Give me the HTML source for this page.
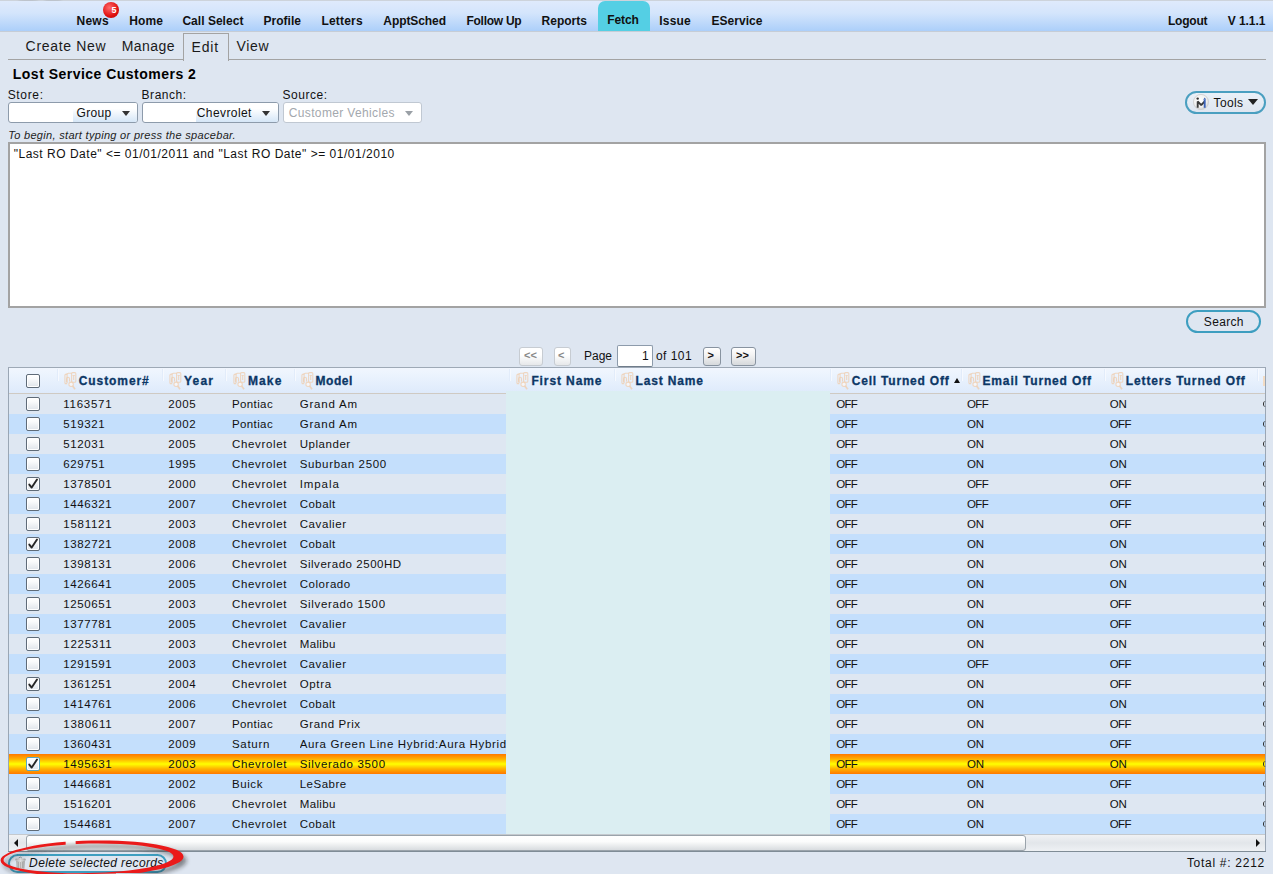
<!DOCTYPE html>
<html><head><meta charset="utf-8"><style>
html,body{margin:0;padding:0;}
body{width:1273px;height:874px;position:relative;overflow:hidden;background:#dee6f1;font-family:"Liberation Sans", sans-serif;}
.t{position:absolute;line-height:1;white-space:nowrap;font-family:"Liberation Sans", sans-serif;}
</style></head><body>
<div style="position:absolute;left:0;top:0;width:1273px;height:1px;background:#cdd3db"></div>
<div style="position:absolute;left:18px;top:-2px;width:20px;height:4px;border-radius:50%;background:#b4bac2;filter:blur(1px);opacity:0.7"></div>
<div style="position:absolute;left:44px;top:-2px;width:18px;height:4px;border-radius:50%;background:#b4bac2;filter:blur(1px);opacity:0.7"></div>
<div style="position:absolute;left:0;top:1px;width:1273px;height:30px;background:linear-gradient(#dfeafc,#d4e5fc 40%,#accffa)"></div>
<div style="position:absolute;left:0;top:31px;width:1273px;height:1px;background:#c6cdd6"></div>
<div style="position:absolute;left:598px;top:1px;width:52px;height:30px;background:#54cfe4;border-radius:7px 7px 0 0"></div>
<div class="t" style="left:76.5px;top:15.34px;font-size:12px;font-weight:bold;font-style:normal;color:#111;letter-spacing:0.264px;">News</div>
<div class="t" style="left:129.3px;top:15.34px;font-size:12px;font-weight:bold;font-style:normal;color:#111;letter-spacing:0.089px;">Home</div>
<div class="t" style="left:182.4px;top:15.34px;font-size:12px;font-weight:bold;font-style:normal;color:#111;letter-spacing:0.03px;">Call Select</div>
<div class="t" style="left:263.5px;top:15.34px;font-size:12px;font-weight:bold;font-style:normal;color:#111;letter-spacing:0.01px;">Profile</div>
<div class="t" style="left:321.5px;top:15.34px;font-size:12px;font-weight:bold;font-style:normal;color:#111;letter-spacing:0.183px;">Letters</div>
<div class="t" style="left:383.3px;top:15.34px;font-size:12px;font-weight:bold;font-style:normal;color:#111;letter-spacing:-0.081px;">ApptSched</div>
<div class="t" style="left:466.5px;top:15.34px;font-size:12px;font-weight:bold;font-style:normal;color:#111;letter-spacing:-0.277px;">Follow Up</div>
<div class="t" style="left:541.6px;top:15.34px;font-size:12px;font-weight:bold;font-style:normal;color:#111;letter-spacing:-0.006px;">Reports</div>
<div class="t" style="left:659.2px;top:15.34px;font-size:12px;font-weight:bold;font-style:normal;color:#111;letter-spacing:0.226px;">Issue</div>
<div class="t" style="left:711.6px;top:15.34px;font-size:12px;font-weight:bold;font-style:normal;color:#111;letter-spacing:0.002px;">EService</div>
<div class="t" style="left:1167.9px;top:15.34px;font-size:12px;font-weight:bold;font-style:normal;color:#111;letter-spacing:-0.207px;">Logout</div>
<div class="t" style="left:1227.7px;top:15.34px;font-size:12px;font-weight:bold;font-style:normal;color:#111;letter-spacing:-0.057px;">V 1.1.1</div>
<div class="t" style="left:607.3px;top:14.34px;font-size:12px;font-weight:bold;font-style:normal;color:#111;letter-spacing:-0.1px;">Fetch</div>
<div style="position:absolute;left:103px;top:2px;width:16px;height:16px;border-radius:50%;background:radial-gradient(circle at 40% 35%,#ff6b6b,#e01010 60%,#b00000);"></div>
<div class="t" style="left:111.5px;top:6.38px;font-size:9px;font-weight:bold;font-style:normal;color:#fff;letter-spacing:0px;">5</div>
<div style="position:absolute;left:8px;top:59px;width:1258px;height:1px;background:#a3a3a3"></div>
<div style="position:absolute;left:183px;top:33px;width:44px;height:27px;border:1px solid #a3a3a3;border-bottom:none;background:#dee6f1"></div>
<div class="t" style="left:25.599999999999998px;top:39.45px;font-size:14px;font-weight:normal;font-style:normal;color:#1a1a1a;letter-spacing:0.681px;">Create New</div>
<div class="t" style="left:121.7px;top:39.45px;font-size:14px;font-weight:normal;font-style:normal;color:#1a1a1a;letter-spacing:0.473px;">Manage</div>
<div class="t" style="left:191.5px;top:40.15px;font-size:14px;font-weight:normal;font-style:normal;color:#1a1a1a;letter-spacing:0.869px;">Edit</div>
<div class="t" style="left:236.39999999999998px;top:39.45px;font-size:14px;font-weight:normal;font-style:normal;color:#1a1a1a;letter-spacing:0.727px;">View</div>
<div class="t" style="left:12.8px;top:66.65px;font-size:14px;font-weight:bold;font-style:normal;color:#000;letter-spacing:0.483px;">Lost Service Customers 2</div>
<div class="t" style="left:7.7px;top:88.84px;font-size:12px;font-weight:normal;font-style:normal;color:#111;letter-spacing:0.667px;">Store:</div>
<div class="t" style="left:141.6px;top:88.84px;font-size:12px;font-weight:normal;font-style:normal;color:#111;letter-spacing:0.522px;">Branch:</div>
<div class="t" style="left:282.59999999999997px;top:88.84px;font-size:12px;font-weight:normal;font-style:normal;color:#111;letter-spacing:0.522px;">Source:</div>
<div style="position:absolute;left:8px;top:102px;width:128px;height:19px;border:1px solid #8d9bab;border-radius:3px;background:#fff;overflow:hidden"><div style="position:absolute;right:0;top:0;width:64px;height:19px;background:linear-gradient(#fff 30%,#d5e6f7)"></div></div>
<div class="t" style="left:76.6px;top:106.84px;font-size:12px;font-weight:normal;font-style:normal;color:#111;letter-spacing:0.331px;">Group</div>
<div style="position:absolute;left:122px;top:111px;width:0;height:0;border-left:4px solid transparent;border-right:4px solid transparent;border-top:5px solid #333"></div>
<div style="position:absolute;left:142px;top:102px;width:135px;height:19px;border:1px solid #8d9bab;border-radius:3px;background:#fff;overflow:hidden"><div style="position:absolute;right:0;top:0;width:82px;height:19px;background:linear-gradient(#fff 30%,#d5e6f7)"></div></div>
<div class="t" style="left:196.8px;top:106.84px;font-size:12px;font-weight:normal;font-style:normal;color:#111;letter-spacing:0.405px;">Chevrolet</div>
<div style="position:absolute;left:262px;top:111px;width:0;height:0;border-left:4px solid transparent;border-right:4px solid transparent;border-top:5px solid #333"></div>
<div style="position:absolute;left:283px;top:102px;width:137px;height:19px;border:1px solid #c0c8d2;border-radius:3px;background:#fff;overflow:hidden"></div>
<div class="t" style="left:288.8px;top:106.84px;font-size:12px;font-weight:normal;font-style:normal;color:#a3a8ae;letter-spacing:0.35px;">Customer Vehicles</div>
<div style="position:absolute;left:405px;top:111px;width:0;height:0;border-left:4px solid transparent;border-right:4px solid transparent;border-top:5px solid #9aa0a6"></div>
<div style="position:absolute;left:1185px;top:91px;width:77px;height:19px;border:2px solid #4a9fc0;border-radius:12px;background:linear-gradient(#e9f0f8,#dfe6f0)"></div>
<svg style="position:absolute;left:1193px;top:94px" width="16" height="16" viewBox="0 0 16 16"><defs><radialGradient id="mg" cx="0.45" cy="0.4" r="0.6"><stop offset="0" stop-color="#fff"/><stop offset="0.7" stop-color="#f0f0f0"/><stop offset="1" stop-color="#cfcfcf"/></radialGradient></defs><circle cx="8" cy="8" r="7.6" fill="url(#mg)" stroke="#cdcdcd" stroke-width="0.8"/><path d="M4.7 13.8V7.4L8.2 11.2L11.7 7.4" stroke="#3a3a3a" stroke-width="1.9" fill="none" stroke-linejoin="bevel"/><path d="M11.7 6V13.8" stroke="#3a62b8" stroke-width="1.9"/><circle cx="4.7" cy="4.6" r="1.2" fill="#333"/><path d="M10.2 5.8L11.7 3.4L13.2 5.8z" fill="#3a62b8"/></svg>
<div class="t" style="left:1213.5px;top:96.84px;font-size:12px;font-weight:normal;font-style:normal;color:#111;letter-spacing:0.397px;">Tools</div>
<div style="position:absolute;left:1248px;top:99px;width:0;height:0;border-left:5px solid transparent;border-right:5px solid transparent;border-top:6px solid #222"></div>
<div class="t" style="left:8.2px;top:129.69px;font-size:11px;font-weight:normal;font-style:italic;color:#222;letter-spacing:0.311px;">To begin, start typing or press the spacebar.</div>
<div style="position:absolute;left:8px;top:142px;width:1254px;height:162px;border:2px solid #a3a3a3;background:#fff"></div>
<div class="t" style="left:13.7px;top:147.84px;font-size:12px;font-weight:normal;font-style:normal;color:#111;letter-spacing:0.514px;">"Last RO Date" &lt;= 01/01/2011 and "Last RO Date" &gt;= 01/01/2010</div>
<div style="position:absolute;left:1186px;top:310px;width:71px;height:19px;border:2px solid #3d9ec0;border-radius:12px"></div>
<div class="t" style="left:1203.8px;top:315.84px;font-size:12px;font-weight:normal;font-style:normal;color:#111;letter-spacing:0.331px;">Search</div>
<div style="position:absolute;left:519px;top:347px;width:22px;height:17px;border:1px solid #c7ccd2;border-radius:3px;background:linear-gradient(#fff,#fff 40%,#e6e8ea)"></div>
<div class="t" style="left:524px;top:349.69px;font-size:11px;font-weight:bold;font-style:normal;color:#888;letter-spacing:0px;">&lt;&lt;</div>
<div style="position:absolute;left:554px;top:347px;width:15px;height:17px;border:1px solid #c7ccd2;border-radius:3px;background:linear-gradient(#fff,#fff 40%,#e6e8ea)"></div>
<div class="t" style="left:558px;top:349.69px;font-size:11px;font-weight:bold;font-style:normal;color:#888;letter-spacing:0px;">&lt;</div>
<div class="t" style="left:584px;top:350.14px;font-size:12px;font-weight:normal;font-style:normal;color:#111;letter-spacing:-0.004px;">Page</div>
<div style="position:absolute;left:617px;top:345px;width:34px;height:20px;border:1px solid #8d9bab;border-bottom-color:#6f7c8a;background:#fff;border-radius:2px"></div>
<div class="t" style="left:642px;top:350.14px;font-size:12px;font-weight:normal;font-style:normal;color:#111;letter-spacing:0px;">1</div>
<div class="t" style="left:656px;top:350.14px;font-size:12px;font-weight:normal;font-style:normal;color:#111;letter-spacing:0.443px;">of 101</div>
<div style="position:absolute;left:703px;top:347px;width:16px;height:17px;border:1px solid #8893a0;border-radius:3px;background:linear-gradient(#fff,#f4f4f4 40%,#d6d9dc)"></div>
<div class="t" style="left:707.5px;top:349.69px;font-size:11px;font-weight:bold;font-style:normal;color:#111;letter-spacing:0px;">&gt;</div>
<div style="position:absolute;left:731px;top:347px;width:23px;height:17px;border:1px solid #8893a0;border-radius:3px;background:linear-gradient(#fff,#f4f4f4 40%,#d6d9dc)"></div>
<div class="t" style="left:736px;top:349.69px;font-size:11px;font-weight:bold;font-style:normal;color:#111;letter-spacing:0px;">&gt;&gt;</div>
<div style="position:absolute;left:8px;top:367px;width:1256px;height:483px;border:1px solid #9aa6b4;border-top-color:#9ea9b6;border-bottom-color:#7f8c96;background:#dfe7f1"></div>
<div style="position:absolute;left:9px;top:368px;width:1256px;height:25px;background:linear-gradient(#f1f6fe,#e9f2fd 40%,#deeafb)"></div>
<div style="position:absolute;left:9px;top:393px;width:1256px;height:1px;background:#cfcac3"></div>
<div style="position:absolute;left:57px;top:369px;width:1px;height:12px;background:#e2ecfa"></div>
<div style="position:absolute;left:58px;top:369px;width:1px;height:12px;background:#f6f9fe"></div>
<div style="position:absolute;left:162px;top:369px;width:1px;height:12px;background:#e2ecfa"></div>
<div style="position:absolute;left:163px;top:369px;width:1px;height:12px;background:#f6f9fe"></div>
<div style="position:absolute;left:225px;top:369px;width:1px;height:12px;background:#e2ecfa"></div>
<div style="position:absolute;left:226px;top:369px;width:1px;height:12px;background:#f6f9fe"></div>
<div style="position:absolute;left:294px;top:369px;width:1px;height:12px;background:#e2ecfa"></div>
<div style="position:absolute;left:295px;top:369px;width:1px;height:12px;background:#f6f9fe"></div>
<div style="position:absolute;left:509px;top:369px;width:1px;height:12px;background:#e2ecfa"></div>
<div style="position:absolute;left:510px;top:369px;width:1px;height:12px;background:#f6f9fe"></div>
<div style="position:absolute;left:614px;top:369px;width:1px;height:12px;background:#e2ecfa"></div>
<div style="position:absolute;left:615px;top:369px;width:1px;height:12px;background:#f6f9fe"></div>
<div style="position:absolute;left:830px;top:369px;width:1px;height:12px;background:#e2ecfa"></div>
<div style="position:absolute;left:831px;top:369px;width:1px;height:12px;background:#f6f9fe"></div>
<div style="position:absolute;left:961px;top:369px;width:1px;height:12px;background:#e2ecfa"></div>
<div style="position:absolute;left:962px;top:369px;width:1px;height:12px;background:#f6f9fe"></div>
<div style="position:absolute;left:1104px;top:369px;width:1px;height:12px;background:#e2ecfa"></div>
<div style="position:absolute;left:1105px;top:369px;width:1px;height:12px;background:#f6f9fe"></div>
<div style="position:absolute;left:1257px;top:369px;width:1px;height:12px;background:#e2ecfa"></div>
<div style="position:absolute;left:1258px;top:369px;width:1px;height:12px;background:#f6f9fe"></div>
<div style="position:absolute;left:26px;top:374px;width:12px;height:12px;border:1px solid #5f6b78;border-radius:2px;background:linear-gradient(#fff,#fafbfc 30%,#dfe4ea);box-shadow:inset 0 0 0 1px #fff"></div>
<svg style="position:absolute;left:63.8px;top:372px" width="14" height="19" viewBox="0 0 14 19"><g fill="none" stroke="#f0cba8" stroke-width="1.05" stroke-opacity="0.72" stroke-linejoin="round"><path d="M0.9 11.6V3.6Q0.9 2.1 2.4 2.1H3.2 M0.9 11.6H3.2"/><path d="M3.1 11.1V2.6Q3.1 1.2 4.5 1.2H7.6"/><rect x="7.6" y="0.6" width="4.2" height="9.6" rx="1"/><path d="M2.6 10.2V6.8Q2.6 5.3 4 5.3Q5.5 5.3 5.5 6.8V9.6"/><path d="M8.6 3.4H10.8 M9.7 3.6V8"/><circle cx="7.1" cy="12.3" r="2.2" fill="#f4f6fb"/><path d="M8.7 14.1L11 17.3" stroke-width="1.7"/></g></svg>
<div class="t" style="left:78.7px;top:375.44px;font-size:12px;font-weight:bold;font-style:normal;color:#0c3766;letter-spacing:0.924px;-webkit-text-stroke:0.3px #0c3766">Customer#</div>
<svg style="position:absolute;left:168.7px;top:372px" width="14" height="19" viewBox="0 0 14 19"><g fill="none" stroke="#f0cba8" stroke-width="1.05" stroke-opacity="0.72" stroke-linejoin="round"><path d="M0.9 11.6V3.6Q0.9 2.1 2.4 2.1H3.2 M0.9 11.6H3.2"/><path d="M3.1 11.1V2.6Q3.1 1.2 4.5 1.2H7.6"/><rect x="7.6" y="0.6" width="4.2" height="9.6" rx="1"/><path d="M2.6 10.2V6.8Q2.6 5.3 4 5.3Q5.5 5.3 5.5 6.8V9.6"/><path d="M8.6 3.4H10.8 M9.7 3.6V8"/><circle cx="7.1" cy="12.3" r="2.2" fill="#f4f6fb"/><path d="M8.7 14.1L11 17.3" stroke-width="1.7"/></g></svg>
<div class="t" style="left:183.9px;top:375.44px;font-size:12px;font-weight:bold;font-style:normal;color:#0c3766;letter-spacing:1.26px;-webkit-text-stroke:0.3px #0c3766">Year</div>
<svg style="position:absolute;left:232.8px;top:372px" width="14" height="19" viewBox="0 0 14 19"><g fill="none" stroke="#f0cba8" stroke-width="1.05" stroke-opacity="0.72" stroke-linejoin="round"><path d="M0.9 11.6V3.6Q0.9 2.1 2.4 2.1H3.2 M0.9 11.6H3.2"/><path d="M3.1 11.1V2.6Q3.1 1.2 4.5 1.2H7.6"/><rect x="7.6" y="0.6" width="4.2" height="9.6" rx="1"/><path d="M2.6 10.2V6.8Q2.6 5.3 4 5.3Q5.5 5.3 5.5 6.8V9.6"/><path d="M8.6 3.4H10.8 M9.7 3.6V8"/><circle cx="7.1" cy="12.3" r="2.2" fill="#f4f6fb"/><path d="M8.7 14.1L11 17.3" stroke-width="1.7"/></g></svg>
<div class="t" style="left:248.0px;top:375.44px;font-size:12px;font-weight:bold;font-style:normal;color:#0c3766;letter-spacing:1.096px;-webkit-text-stroke:0.3px #0c3766">Make</div>
<svg style="position:absolute;left:300.9px;top:372px" width="14" height="19" viewBox="0 0 14 19"><g fill="none" stroke="#f0cba8" stroke-width="1.05" stroke-opacity="0.72" stroke-linejoin="round"><path d="M0.9 11.6V3.6Q0.9 2.1 2.4 2.1H3.2 M0.9 11.6H3.2"/><path d="M3.1 11.1V2.6Q3.1 1.2 4.5 1.2H7.6"/><rect x="7.6" y="0.6" width="4.2" height="9.6" rx="1"/><path d="M2.6 10.2V6.8Q2.6 5.3 4 5.3Q5.5 5.3 5.5 6.8V9.6"/><path d="M8.6 3.4H10.8 M9.7 3.6V8"/><circle cx="7.1" cy="12.3" r="2.2" fill="#f4f6fb"/><path d="M8.7 14.1L11 17.3" stroke-width="1.7"/></g></svg>
<div class="t" style="left:315.5px;top:375.44px;font-size:12px;font-weight:bold;font-style:normal;color:#0c3766;letter-spacing:0.569px;-webkit-text-stroke:0.3px #0c3766">Model</div>
<svg style="position:absolute;left:516.2px;top:372px" width="14" height="19" viewBox="0 0 14 19"><g fill="none" stroke="#f0cba8" stroke-width="1.05" stroke-opacity="0.72" stroke-linejoin="round"><path d="M0.9 11.6V3.6Q0.9 2.1 2.4 2.1H3.2 M0.9 11.6H3.2"/><path d="M3.1 11.1V2.6Q3.1 1.2 4.5 1.2H7.6"/><rect x="7.6" y="0.6" width="4.2" height="9.6" rx="1"/><path d="M2.6 10.2V6.8Q2.6 5.3 4 5.3Q5.5 5.3 5.5 6.8V9.6"/><path d="M8.6 3.4H10.8 M9.7 3.6V8"/><circle cx="7.1" cy="12.3" r="2.2" fill="#f4f6fb"/><path d="M8.7 14.1L11 17.3" stroke-width="1.7"/></g></svg>
<div class="t" style="left:531.4px;top:375.44px;font-size:12px;font-weight:bold;font-style:normal;color:#0c3766;letter-spacing:0.898px;-webkit-text-stroke:0.3px #0c3766">First Name</div>
<svg style="position:absolute;left:621px;top:372px" width="14" height="19" viewBox="0 0 14 19"><g fill="none" stroke="#f0cba8" stroke-width="1.05" stroke-opacity="0.72" stroke-linejoin="round"><path d="M0.9 11.6V3.6Q0.9 2.1 2.4 2.1H3.2 M0.9 11.6H3.2"/><path d="M3.1 11.1V2.6Q3.1 1.2 4.5 1.2H7.6"/><rect x="7.6" y="0.6" width="4.2" height="9.6" rx="1"/><path d="M2.6 10.2V6.8Q2.6 5.3 4 5.3Q5.5 5.3 5.5 6.8V9.6"/><path d="M8.6 3.4H10.8 M9.7 3.6V8"/><circle cx="7.1" cy="12.3" r="2.2" fill="#f4f6fb"/><path d="M8.7 14.1L11 17.3" stroke-width="1.7"/></g></svg>
<div class="t" style="left:635.5px;top:375.44px;font-size:12px;font-weight:bold;font-style:normal;color:#0c3766;letter-spacing:0.835px;-webkit-text-stroke:0.3px #0c3766">Last Name</div>
<svg style="position:absolute;left:837px;top:372px" width="14" height="19" viewBox="0 0 14 19"><g fill="none" stroke="#f0cba8" stroke-width="1.05" stroke-opacity="0.72" stroke-linejoin="round"><path d="M0.9 11.6V3.6Q0.9 2.1 2.4 2.1H3.2 M0.9 11.6H3.2"/><path d="M3.1 11.1V2.6Q3.1 1.2 4.5 1.2H7.6"/><rect x="7.6" y="0.6" width="4.2" height="9.6" rx="1"/><path d="M2.6 10.2V6.8Q2.6 5.3 4 5.3Q5.5 5.3 5.5 6.8V9.6"/><path d="M8.6 3.4H10.8 M9.7 3.6V8"/><circle cx="7.1" cy="12.3" r="2.2" fill="#f4f6fb"/><path d="M8.7 14.1L11 17.3" stroke-width="1.7"/></g></svg>
<div class="t" style="left:851.7px;top:375.44px;font-size:12px;font-weight:bold;font-style:normal;color:#0c3766;letter-spacing:0.803px;-webkit-text-stroke:0.3px #0c3766">Cell Turned Off</div>
<svg style="position:absolute;left:968px;top:372px" width="14" height="19" viewBox="0 0 14 19"><g fill="none" stroke="#f0cba8" stroke-width="1.05" stroke-opacity="0.72" stroke-linejoin="round"><path d="M0.9 11.6V3.6Q0.9 2.1 2.4 2.1H3.2 M0.9 11.6H3.2"/><path d="M3.1 11.1V2.6Q3.1 1.2 4.5 1.2H7.6"/><rect x="7.6" y="0.6" width="4.2" height="9.6" rx="1"/><path d="M2.6 10.2V6.8Q2.6 5.3 4 5.3Q5.5 5.3 5.5 6.8V9.6"/><path d="M8.6 3.4H10.8 M9.7 3.6V8"/><circle cx="7.1" cy="12.3" r="2.2" fill="#f4f6fb"/><path d="M8.7 14.1L11 17.3" stroke-width="1.7"/></g></svg>
<div class="t" style="left:982.5px;top:375.44px;font-size:12px;font-weight:bold;font-style:normal;color:#0c3766;letter-spacing:0.847px;-webkit-text-stroke:0.3px #0c3766">Email Turned Off</div>
<svg style="position:absolute;left:1111px;top:372px" width="14" height="19" viewBox="0 0 14 19"><g fill="none" stroke="#f0cba8" stroke-width="1.05" stroke-opacity="0.72" stroke-linejoin="round"><path d="M0.9 11.6V3.6Q0.9 2.1 2.4 2.1H3.2 M0.9 11.6H3.2"/><path d="M3.1 11.1V2.6Q3.1 1.2 4.5 1.2H7.6"/><rect x="7.6" y="0.6" width="4.2" height="9.6" rx="1"/><path d="M2.6 10.2V6.8Q2.6 5.3 4 5.3Q5.5 5.3 5.5 6.8V9.6"/><path d="M8.6 3.4H10.8 M9.7 3.6V8"/><circle cx="7.1" cy="12.3" r="2.2" fill="#f4f6fb"/><path d="M8.7 14.1L11 17.3" stroke-width="1.7"/></g></svg>
<div class="t" style="left:1125.7px;top:375.44px;font-size:12px;font-weight:bold;font-style:normal;color:#0c3766;letter-spacing:0.902px;-webkit-text-stroke:0.3px #0c3766">Letters Turned Off</div>
<div style="position:absolute;left:1263px;top:376px;width:2px;height:10px;background:#f3dcc4"></div>
<div style="position:absolute;left:954px;top:378px;width:0;height:0;border-left:3.5px solid transparent;border-right:3.5px solid transparent;border-bottom:5px solid #111"></div>
<div style="position:absolute;left:9px;top:394px;width:1256px;height:20px;background:#dee7f2"></div>
<div style="position:absolute;left:26px;top:397px;width:12px;height:12px;border:1px solid #5f6b78;border-radius:2px;background:linear-gradient(#fff,#fafbfc 30%,#dfe4ea);box-shadow:inset 0 0 0 1px #fff"></div>
<div class="t" style="left:63.3px;top:399.27px;font-size:11.5px;font-weight:normal;font-style:normal;color:#111;letter-spacing:0.732px;">1163571</div>
<div class="t" style="left:168.2px;top:399.27px;font-size:11.5px;font-weight:normal;font-style:normal;color:#111;letter-spacing:0.609px;">2005</div>
<div class="t" style="left:232px;top:399.27px;font-size:11.5px;font-weight:normal;font-style:normal;color:#111;letter-spacing:0.379px;">Pontiac</div>
<div style="position:absolute;left:300px;top:394px;width:206px;height:20px;overflow:hidden"><div class="t" style="left:-0.3px;top:5.27px;font-size:11.5px;font-weight:normal;font-style:normal;color:#111;letter-spacing:0.783px;">Grand Am</div></div>
<div class="t" style="left:836.2px;top:399.27px;font-size:11.5px;font-weight:normal;font-style:normal;color:#111;letter-spacing:-0.667px;">OFF</div>
<div class="t" style="left:967px;top:399.27px;font-size:11.5px;font-weight:normal;font-style:normal;color:#111;letter-spacing:-0.667px;">OFF</div>
<div class="t" style="left:1109.8px;top:399.27px;font-size:11.5px;font-weight:normal;font-style:normal;color:#111;letter-spacing:-0.125px;">ON</div>
<div style="position:absolute;left:1263px;top:401px;width:3px;height:6px;border-left:1.6px solid #2a2a2a;border-radius:3px 0 0 3px;box-sizing:border-box"></div>
<div style="position:absolute;left:9px;top:414px;width:1256px;height:20px;background:#c4dffc"></div>
<div style="position:absolute;left:26px;top:417px;width:12px;height:12px;border:1px solid #5f6b78;border-radius:2px;background:linear-gradient(#fff,#fafbfc 30%,#dfe4ea);box-shadow:inset 0 0 0 1px #fff"></div>
<div class="t" style="left:63.3px;top:419.27px;font-size:11.5px;font-weight:normal;font-style:normal;color:#111;letter-spacing:0.609px;">519321</div>
<div class="t" style="left:168.2px;top:419.27px;font-size:11.5px;font-weight:normal;font-style:normal;color:#111;letter-spacing:0.609px;">2002</div>
<div class="t" style="left:232px;top:419.27px;font-size:11.5px;font-weight:normal;font-style:normal;color:#111;letter-spacing:0.379px;">Pontiac</div>
<div style="position:absolute;left:300px;top:414px;width:206px;height:20px;overflow:hidden"><div class="t" style="left:-0.3px;top:5.27px;font-size:11.5px;font-weight:normal;font-style:normal;color:#111;letter-spacing:0.783px;">Grand Am</div></div>
<div class="t" style="left:836.2px;top:419.27px;font-size:11.5px;font-weight:normal;font-style:normal;color:#111;letter-spacing:-0.667px;">OFF</div>
<div class="t" style="left:967px;top:419.27px;font-size:11.5px;font-weight:normal;font-style:normal;color:#111;letter-spacing:-0.125px;">ON</div>
<div class="t" style="left:1109.8px;top:419.27px;font-size:11.5px;font-weight:normal;font-style:normal;color:#111;letter-spacing:-0.667px;">OFF</div>
<div style="position:absolute;left:1263px;top:421px;width:3px;height:6px;border-left:1.6px solid #2a2a2a;border-radius:3px 0 0 3px;box-sizing:border-box"></div>
<div style="position:absolute;left:9px;top:434px;width:1256px;height:20px;background:#dee7f2"></div>
<div style="position:absolute;left:26px;top:437px;width:12px;height:12px;border:1px solid #5f6b78;border-radius:2px;background:linear-gradient(#fff,#fafbfc 30%,#dfe4ea);box-shadow:inset 0 0 0 1px #fff"></div>
<div class="t" style="left:63.3px;top:439.27px;font-size:11.5px;font-weight:normal;font-style:normal;color:#111;letter-spacing:0.609px;">512031</div>
<div class="t" style="left:168.2px;top:439.27px;font-size:11.5px;font-weight:normal;font-style:normal;color:#111;letter-spacing:0.609px;">2005</div>
<div class="t" style="left:232px;top:439.27px;font-size:11.5px;font-weight:normal;font-style:normal;color:#111;letter-spacing:0.644px;">Chevrolet</div>
<div style="position:absolute;left:300px;top:434px;width:206px;height:20px;overflow:hidden"><div class="t" style="left:-0.3px;top:5.27px;font-size:11.5px;font-weight:normal;font-style:normal;color:#111;letter-spacing:0.543px;">Uplander</div></div>
<div class="t" style="left:836.2px;top:439.27px;font-size:11.5px;font-weight:normal;font-style:normal;color:#111;letter-spacing:-0.667px;">OFF</div>
<div class="t" style="left:967px;top:439.27px;font-size:11.5px;font-weight:normal;font-style:normal;color:#111;letter-spacing:-0.125px;">ON</div>
<div class="t" style="left:1109.8px;top:439.27px;font-size:11.5px;font-weight:normal;font-style:normal;color:#111;letter-spacing:-0.125px;">ON</div>
<div style="position:absolute;left:1263px;top:441px;width:3px;height:6px;border-left:1.6px solid #2a2a2a;border-radius:3px 0 0 3px;box-sizing:border-box"></div>
<div style="position:absolute;left:9px;top:454px;width:1256px;height:20px;background:#c4dffc"></div>
<div style="position:absolute;left:26px;top:457px;width:12px;height:12px;border:1px solid #5f6b78;border-radius:2px;background:linear-gradient(#fff,#fafbfc 30%,#dfe4ea);box-shadow:inset 0 0 0 1px #fff"></div>
<div class="t" style="left:63.3px;top:459.27px;font-size:11.5px;font-weight:normal;font-style:normal;color:#111;letter-spacing:0.609px;">629751</div>
<div class="t" style="left:168.2px;top:459.27px;font-size:11.5px;font-weight:normal;font-style:normal;color:#111;letter-spacing:0.609px;">1995</div>
<div class="t" style="left:232px;top:459.27px;font-size:11.5px;font-weight:normal;font-style:normal;color:#111;letter-spacing:0.644px;">Chevrolet</div>
<div style="position:absolute;left:300px;top:454px;width:206px;height:20px;overflow:hidden"><div class="t" style="left:-0.3px;top:5.27px;font-size:11.5px;font-weight:normal;font-style:normal;color:#111;letter-spacing:0.647px;">Suburban 2500</div></div>
<div class="t" style="left:836.2px;top:459.27px;font-size:11.5px;font-weight:normal;font-style:normal;color:#111;letter-spacing:-0.667px;">OFF</div>
<div class="t" style="left:967px;top:459.27px;font-size:11.5px;font-weight:normal;font-style:normal;color:#111;letter-spacing:-0.125px;">ON</div>
<div class="t" style="left:1109.8px;top:459.27px;font-size:11.5px;font-weight:normal;font-style:normal;color:#111;letter-spacing:-0.125px;">ON</div>
<div style="position:absolute;left:1263px;top:461px;width:3px;height:6px;border-left:1.6px solid #2a2a2a;border-radius:3px 0 0 3px;box-sizing:border-box"></div>
<div style="position:absolute;left:9px;top:474px;width:1256px;height:20px;background:#dee7f2"></div>
<div style="position:absolute;left:26px;top:477px;width:12px;height:12px;border:1px solid #5f6b78;border-radius:2px;background:linear-gradient(#fff,#fafbfc 30%,#dfe4ea);box-shadow:inset 0 0 0 1px #fff"></div><svg style="position:absolute;left:27px;top:477px" width="13" height="13" viewBox="0 0 13 13"><path d="M2.3 7.6 L4.7 10.6 L10 2.6" stroke="#262626" stroke-width="1.9" fill="none" stroke-linejoin="round" stroke-linecap="round"/></svg>
<div class="t" style="left:63.3px;top:479.27px;font-size:11.5px;font-weight:normal;font-style:normal;color:#111;letter-spacing:0.609px;">1378501</div>
<div class="t" style="left:168.2px;top:479.27px;font-size:11.5px;font-weight:normal;font-style:normal;color:#111;letter-spacing:0.609px;">2000</div>
<div class="t" style="left:232px;top:479.27px;font-size:11.5px;font-weight:normal;font-style:normal;color:#111;letter-spacing:0.644px;">Chevrolet</div>
<div style="position:absolute;left:300px;top:474px;width:206px;height:20px;overflow:hidden"><div class="t" style="left:-0.3px;top:5.27px;font-size:11.5px;font-weight:normal;font-style:normal;color:#111;letter-spacing:0.917px;">Impala</div></div>
<div class="t" style="left:836.2px;top:479.27px;font-size:11.5px;font-weight:normal;font-style:normal;color:#111;letter-spacing:-0.667px;">OFF</div>
<div class="t" style="left:967px;top:479.27px;font-size:11.5px;font-weight:normal;font-style:normal;color:#111;letter-spacing:-0.667px;">OFF</div>
<div class="t" style="left:1109.8px;top:479.27px;font-size:11.5px;font-weight:normal;font-style:normal;color:#111;letter-spacing:-0.667px;">OFF</div>
<div style="position:absolute;left:1263px;top:481px;width:3px;height:6px;border-left:1.6px solid #2a2a2a;border-radius:3px 0 0 3px;box-sizing:border-box"></div>
<div style="position:absolute;left:9px;top:494px;width:1256px;height:20px;background:#c4dffc"></div>
<div style="position:absolute;left:26px;top:497px;width:12px;height:12px;border:1px solid #5f6b78;border-radius:2px;background:linear-gradient(#fff,#fafbfc 30%,#dfe4ea);box-shadow:inset 0 0 0 1px #fff"></div>
<div class="t" style="left:63.3px;top:499.27px;font-size:11.5px;font-weight:normal;font-style:normal;color:#111;letter-spacing:0.609px;">1446321</div>
<div class="t" style="left:168.2px;top:499.27px;font-size:11.5px;font-weight:normal;font-style:normal;color:#111;letter-spacing:0.609px;">2007</div>
<div class="t" style="left:232px;top:499.27px;font-size:11.5px;font-weight:normal;font-style:normal;color:#111;letter-spacing:0.644px;">Chevrolet</div>
<div style="position:absolute;left:300px;top:494px;width:206px;height:20px;overflow:hidden"><div class="t" style="left:-0.3px;top:5.27px;font-size:11.5px;font-weight:normal;font-style:normal;color:#111;letter-spacing:0.461px;">Cobalt</div></div>
<div class="t" style="left:836.2px;top:499.27px;font-size:11.5px;font-weight:normal;font-style:normal;color:#111;letter-spacing:-0.667px;">OFF</div>
<div class="t" style="left:967px;top:499.27px;font-size:11.5px;font-weight:normal;font-style:normal;color:#111;letter-spacing:-0.667px;">OFF</div>
<div class="t" style="left:1109.8px;top:499.27px;font-size:11.5px;font-weight:normal;font-style:normal;color:#111;letter-spacing:-0.667px;">OFF</div>
<div style="position:absolute;left:1263px;top:501px;width:3px;height:6px;border-left:1.6px solid #2a2a2a;border-radius:3px 0 0 3px;box-sizing:border-box"></div>
<div style="position:absolute;left:9px;top:514px;width:1256px;height:20px;background:#dee7f2"></div>
<div style="position:absolute;left:26px;top:517px;width:12px;height:12px;border:1px solid #5f6b78;border-radius:2px;background:linear-gradient(#fff,#fafbfc 30%,#dfe4ea);box-shadow:inset 0 0 0 1px #fff"></div>
<div class="t" style="left:63.3px;top:519.27px;font-size:11.5px;font-weight:normal;font-style:normal;color:#111;letter-spacing:0.732px;">1581121</div>
<div class="t" style="left:168.2px;top:519.27px;font-size:11.5px;font-weight:normal;font-style:normal;color:#111;letter-spacing:0.609px;">2003</div>
<div class="t" style="left:232px;top:519.27px;font-size:11.5px;font-weight:normal;font-style:normal;color:#111;letter-spacing:0.644px;">Chevrolet</div>
<div style="position:absolute;left:300px;top:514px;width:206px;height:20px;overflow:hidden"><div class="t" style="left:-0.3px;top:5.27px;font-size:11.5px;font-weight:normal;font-style:normal;color:#111;letter-spacing:0.602px;">Cavalier</div></div>
<div class="t" style="left:836.2px;top:519.27px;font-size:11.5px;font-weight:normal;font-style:normal;color:#111;letter-spacing:-0.667px;">OFF</div>
<div class="t" style="left:967px;top:519.27px;font-size:11.5px;font-weight:normal;font-style:normal;color:#111;letter-spacing:-0.125px;">ON</div>
<div class="t" style="left:1109.8px;top:519.27px;font-size:11.5px;font-weight:normal;font-style:normal;color:#111;letter-spacing:-0.667px;">OFF</div>
<div style="position:absolute;left:1263px;top:521px;width:3px;height:6px;border-left:1.6px solid #2a2a2a;border-radius:3px 0 0 3px;box-sizing:border-box"></div>
<div style="position:absolute;left:9px;top:534px;width:1256px;height:20px;background:#c4dffc"></div>
<div style="position:absolute;left:26px;top:537px;width:12px;height:12px;border:1px solid #5f6b78;border-radius:2px;background:linear-gradient(#fff,#fafbfc 30%,#dfe4ea);box-shadow:inset 0 0 0 1px #fff"></div><svg style="position:absolute;left:27px;top:537px" width="13" height="13" viewBox="0 0 13 13"><path d="M2.3 7.6 L4.7 10.6 L10 2.6" stroke="#262626" stroke-width="1.9" fill="none" stroke-linejoin="round" stroke-linecap="round"/></svg>
<div class="t" style="left:63.3px;top:539.27px;font-size:11.5px;font-weight:normal;font-style:normal;color:#111;letter-spacing:0.609px;">1382721</div>
<div class="t" style="left:168.2px;top:539.27px;font-size:11.5px;font-weight:normal;font-style:normal;color:#111;letter-spacing:0.609px;">2008</div>
<div class="t" style="left:232px;top:539.27px;font-size:11.5px;font-weight:normal;font-style:normal;color:#111;letter-spacing:0.644px;">Chevrolet</div>
<div style="position:absolute;left:300px;top:534px;width:206px;height:20px;overflow:hidden"><div class="t" style="left:-0.3px;top:5.27px;font-size:11.5px;font-weight:normal;font-style:normal;color:#111;letter-spacing:0.461px;">Cobalt</div></div>
<div class="t" style="left:836.2px;top:539.27px;font-size:11.5px;font-weight:normal;font-style:normal;color:#111;letter-spacing:-0.667px;">OFF</div>
<div class="t" style="left:967px;top:539.27px;font-size:11.5px;font-weight:normal;font-style:normal;color:#111;letter-spacing:-0.125px;">ON</div>
<div class="t" style="left:1109.8px;top:539.27px;font-size:11.5px;font-weight:normal;font-style:normal;color:#111;letter-spacing:-0.125px;">ON</div>
<div style="position:absolute;left:1263px;top:541px;width:3px;height:6px;border-left:1.6px solid #2a2a2a;border-radius:3px 0 0 3px;box-sizing:border-box"></div>
<div style="position:absolute;left:9px;top:554px;width:1256px;height:20px;background:#dee7f2"></div>
<div style="position:absolute;left:26px;top:557px;width:12px;height:12px;border:1px solid #5f6b78;border-radius:2px;background:linear-gradient(#fff,#fafbfc 30%,#dfe4ea);box-shadow:inset 0 0 0 1px #fff"></div>
<div class="t" style="left:63.3px;top:559.27px;font-size:11.5px;font-weight:normal;font-style:normal;color:#111;letter-spacing:0.609px;">1398131</div>
<div class="t" style="left:168.2px;top:559.27px;font-size:11.5px;font-weight:normal;font-style:normal;color:#111;letter-spacing:0.609px;">2006</div>
<div class="t" style="left:232px;top:559.27px;font-size:11.5px;font-weight:normal;font-style:normal;color:#111;letter-spacing:0.644px;">Chevrolet</div>
<div style="position:absolute;left:300px;top:554px;width:206px;height:20px;overflow:hidden"><div class="t" style="left:-0.3px;top:5.27px;font-size:11.5px;font-weight:normal;font-style:normal;color:#111;letter-spacing:0.543px;">Silverado 2500HD</div></div>
<div class="t" style="left:836.2px;top:559.27px;font-size:11.5px;font-weight:normal;font-style:normal;color:#111;letter-spacing:-0.667px;">OFF</div>
<div class="t" style="left:967px;top:559.27px;font-size:11.5px;font-weight:normal;font-style:normal;color:#111;letter-spacing:-0.125px;">ON</div>
<div class="t" style="left:1109.8px;top:559.27px;font-size:11.5px;font-weight:normal;font-style:normal;color:#111;letter-spacing:-0.125px;">ON</div>
<div style="position:absolute;left:1263px;top:561px;width:3px;height:6px;border-left:1.6px solid #2a2a2a;border-radius:3px 0 0 3px;box-sizing:border-box"></div>
<div style="position:absolute;left:9px;top:574px;width:1256px;height:20px;background:#c4dffc"></div>
<div style="position:absolute;left:26px;top:577px;width:12px;height:12px;border:1px solid #5f6b78;border-radius:2px;background:linear-gradient(#fff,#fafbfc 30%,#dfe4ea);box-shadow:inset 0 0 0 1px #fff"></div>
<div class="t" style="left:63.3px;top:579.27px;font-size:11.5px;font-weight:normal;font-style:normal;color:#111;letter-spacing:0.609px;">1426641</div>
<div class="t" style="left:168.2px;top:579.27px;font-size:11.5px;font-weight:normal;font-style:normal;color:#111;letter-spacing:0.609px;">2005</div>
<div class="t" style="left:232px;top:579.27px;font-size:11.5px;font-weight:normal;font-style:normal;color:#111;letter-spacing:0.644px;">Chevrolet</div>
<div style="position:absolute;left:300px;top:574px;width:206px;height:20px;overflow:hidden"><div class="t" style="left:-0.3px;top:5.27px;font-size:11.5px;font-weight:normal;font-style:normal;color:#111;letter-spacing:0.543px;">Colorado</div></div>
<div class="t" style="left:836.2px;top:579.27px;font-size:11.5px;font-weight:normal;font-style:normal;color:#111;letter-spacing:-0.667px;">OFF</div>
<div class="t" style="left:967px;top:579.27px;font-size:11.5px;font-weight:normal;font-style:normal;color:#111;letter-spacing:-0.125px;">ON</div>
<div class="t" style="left:1109.8px;top:579.27px;font-size:11.5px;font-weight:normal;font-style:normal;color:#111;letter-spacing:-0.125px;">ON</div>
<div style="position:absolute;left:1263px;top:581px;width:3px;height:6px;border-left:1.6px solid #2a2a2a;border-radius:3px 0 0 3px;box-sizing:border-box"></div>
<div style="position:absolute;left:9px;top:594px;width:1256px;height:20px;background:#dee7f2"></div>
<div style="position:absolute;left:26px;top:597px;width:12px;height:12px;border:1px solid #5f6b78;border-radius:2px;background:linear-gradient(#fff,#fafbfc 30%,#dfe4ea);box-shadow:inset 0 0 0 1px #fff"></div>
<div class="t" style="left:63.3px;top:599.27px;font-size:11.5px;font-weight:normal;font-style:normal;color:#111;letter-spacing:0.609px;">1250651</div>
<div class="t" style="left:168.2px;top:599.27px;font-size:11.5px;font-weight:normal;font-style:normal;color:#111;letter-spacing:0.609px;">2003</div>
<div class="t" style="left:232px;top:599.27px;font-size:11.5px;font-weight:normal;font-style:normal;color:#111;letter-spacing:0.644px;">Chevrolet</div>
<div style="position:absolute;left:300px;top:594px;width:206px;height:20px;overflow:hidden"><div class="t" style="left:-0.3px;top:5.27px;font-size:11.5px;font-weight:normal;font-style:normal;color:#111;letter-spacing:0.665px;">Silverado 1500</div></div>
<div class="t" style="left:836.2px;top:599.27px;font-size:11.5px;font-weight:normal;font-style:normal;color:#111;letter-spacing:-0.667px;">OFF</div>
<div class="t" style="left:967px;top:599.27px;font-size:11.5px;font-weight:normal;font-style:normal;color:#111;letter-spacing:-0.125px;">ON</div>
<div class="t" style="left:1109.8px;top:599.27px;font-size:11.5px;font-weight:normal;font-style:normal;color:#111;letter-spacing:-0.667px;">OFF</div>
<div style="position:absolute;left:1263px;top:601px;width:3px;height:6px;border-left:1.6px solid #2a2a2a;border-radius:3px 0 0 3px;box-sizing:border-box"></div>
<div style="position:absolute;left:9px;top:614px;width:1256px;height:20px;background:#c4dffc"></div>
<div style="position:absolute;left:26px;top:617px;width:12px;height:12px;border:1px solid #5f6b78;border-radius:2px;background:linear-gradient(#fff,#fafbfc 30%,#dfe4ea);box-shadow:inset 0 0 0 1px #fff"></div>
<div class="t" style="left:63.3px;top:619.27px;font-size:11.5px;font-weight:normal;font-style:normal;color:#111;letter-spacing:0.609px;">1377781</div>
<div class="t" style="left:168.2px;top:619.27px;font-size:11.5px;font-weight:normal;font-style:normal;color:#111;letter-spacing:0.609px;">2005</div>
<div class="t" style="left:232px;top:619.27px;font-size:11.5px;font-weight:normal;font-style:normal;color:#111;letter-spacing:0.644px;">Chevrolet</div>
<div style="position:absolute;left:300px;top:614px;width:206px;height:20px;overflow:hidden"><div class="t" style="left:-0.3px;top:5.27px;font-size:11.5px;font-weight:normal;font-style:normal;color:#111;letter-spacing:0.602px;">Cavalier</div></div>
<div class="t" style="left:836.2px;top:619.27px;font-size:11.5px;font-weight:normal;font-style:normal;color:#111;letter-spacing:-0.667px;">OFF</div>
<div class="t" style="left:967px;top:619.27px;font-size:11.5px;font-weight:normal;font-style:normal;color:#111;letter-spacing:-0.125px;">ON</div>
<div class="t" style="left:1109.8px;top:619.27px;font-size:11.5px;font-weight:normal;font-style:normal;color:#111;letter-spacing:-0.667px;">OFF</div>
<div style="position:absolute;left:1263px;top:621px;width:3px;height:6px;border-left:1.6px solid #2a2a2a;border-radius:3px 0 0 3px;box-sizing:border-box"></div>
<div style="position:absolute;left:9px;top:634px;width:1256px;height:20px;background:#dee7f2"></div>
<div style="position:absolute;left:26px;top:637px;width:12px;height:12px;border:1px solid #5f6b78;border-radius:2px;background:linear-gradient(#fff,#fafbfc 30%,#dfe4ea);box-shadow:inset 0 0 0 1px #fff"></div>
<div class="t" style="left:63.3px;top:639.27px;font-size:11.5px;font-weight:normal;font-style:normal;color:#111;letter-spacing:0.732px;">1225311</div>
<div class="t" style="left:168.2px;top:639.27px;font-size:11.5px;font-weight:normal;font-style:normal;color:#111;letter-spacing:0.609px;">2003</div>
<div class="t" style="left:232px;top:639.27px;font-size:11.5px;font-weight:normal;font-style:normal;color:#111;letter-spacing:0.644px;">Chevrolet</div>
<div style="position:absolute;left:300px;top:634px;width:206px;height:20px;overflow:hidden"><div class="t" style="left:-0.3px;top:5.27px;font-size:11.5px;font-weight:normal;font-style:normal;color:#111;letter-spacing:0.354px;">Malibu</div></div>
<div class="t" style="left:836.2px;top:639.27px;font-size:11.5px;font-weight:normal;font-style:normal;color:#111;letter-spacing:-0.667px;">OFF</div>
<div class="t" style="left:967px;top:639.27px;font-size:11.5px;font-weight:normal;font-style:normal;color:#111;letter-spacing:-0.125px;">ON</div>
<div class="t" style="left:1109.8px;top:639.27px;font-size:11.5px;font-weight:normal;font-style:normal;color:#111;letter-spacing:-0.125px;">ON</div>
<div style="position:absolute;left:1263px;top:641px;width:3px;height:6px;border-left:1.6px solid #2a2a2a;border-radius:3px 0 0 3px;box-sizing:border-box"></div>
<div style="position:absolute;left:9px;top:654px;width:1256px;height:20px;background:#c4dffc"></div>
<div style="position:absolute;left:26px;top:657px;width:12px;height:12px;border:1px solid #5f6b78;border-radius:2px;background:linear-gradient(#fff,#fafbfc 30%,#dfe4ea);box-shadow:inset 0 0 0 1px #fff"></div>
<div class="t" style="left:63.3px;top:659.27px;font-size:11.5px;font-weight:normal;font-style:normal;color:#111;letter-spacing:0.609px;">1291591</div>
<div class="t" style="left:168.2px;top:659.27px;font-size:11.5px;font-weight:normal;font-style:normal;color:#111;letter-spacing:0.609px;">2003</div>
<div class="t" style="left:232px;top:659.27px;font-size:11.5px;font-weight:normal;font-style:normal;color:#111;letter-spacing:0.644px;">Chevrolet</div>
<div style="position:absolute;left:300px;top:654px;width:206px;height:20px;overflow:hidden"><div class="t" style="left:-0.3px;top:5.27px;font-size:11.5px;font-weight:normal;font-style:normal;color:#111;letter-spacing:0.602px;">Cavalier</div></div>
<div class="t" style="left:836.2px;top:659.27px;font-size:11.5px;font-weight:normal;font-style:normal;color:#111;letter-spacing:-0.667px;">OFF</div>
<div class="t" style="left:967px;top:659.27px;font-size:11.5px;font-weight:normal;font-style:normal;color:#111;letter-spacing:-0.667px;">OFF</div>
<div class="t" style="left:1109.8px;top:659.27px;font-size:11.5px;font-weight:normal;font-style:normal;color:#111;letter-spacing:-0.667px;">OFF</div>
<div style="position:absolute;left:1263px;top:661px;width:3px;height:6px;border-left:1.6px solid #2a2a2a;border-radius:3px 0 0 3px;box-sizing:border-box"></div>
<div style="position:absolute;left:9px;top:674px;width:1256px;height:20px;background:#dee7f2"></div>
<div style="position:absolute;left:26px;top:677px;width:12px;height:12px;border:1px solid #5f6b78;border-radius:2px;background:linear-gradient(#fff,#fafbfc 30%,#dfe4ea);box-shadow:inset 0 0 0 1px #fff"></div><svg style="position:absolute;left:27px;top:677px" width="13" height="13" viewBox="0 0 13 13"><path d="M2.3 7.6 L4.7 10.6 L10 2.6" stroke="#262626" stroke-width="1.9" fill="none" stroke-linejoin="round" stroke-linecap="round"/></svg>
<div class="t" style="left:63.3px;top:679.27px;font-size:11.5px;font-weight:normal;font-style:normal;color:#111;letter-spacing:0.609px;">1361251</div>
<div class="t" style="left:168.2px;top:679.27px;font-size:11.5px;font-weight:normal;font-style:normal;color:#111;letter-spacing:0.609px;">2004</div>
<div class="t" style="left:232px;top:679.27px;font-size:11.5px;font-weight:normal;font-style:normal;color:#111;letter-spacing:0.644px;">Chevrolet</div>
<div style="position:absolute;left:300px;top:674px;width:206px;height:20px;overflow:hidden"><div class="t" style="left:-0.3px;top:5.27px;font-size:11.5px;font-weight:normal;font-style:normal;color:#111;letter-spacing:0.653px;">Optra</div></div>
<div class="t" style="left:836.2px;top:679.27px;font-size:11.5px;font-weight:normal;font-style:normal;color:#111;letter-spacing:-0.667px;">OFF</div>
<div class="t" style="left:967px;top:679.27px;font-size:11.5px;font-weight:normal;font-style:normal;color:#111;letter-spacing:-0.125px;">ON</div>
<div class="t" style="left:1109.8px;top:679.27px;font-size:11.5px;font-weight:normal;font-style:normal;color:#111;letter-spacing:-0.667px;">OFF</div>
<div style="position:absolute;left:1263px;top:681px;width:3px;height:6px;border-left:1.6px solid #2a2a2a;border-radius:3px 0 0 3px;box-sizing:border-box"></div>
<div style="position:absolute;left:9px;top:694px;width:1256px;height:20px;background:#c4dffc"></div>
<div style="position:absolute;left:26px;top:697px;width:12px;height:12px;border:1px solid #5f6b78;border-radius:2px;background:linear-gradient(#fff,#fafbfc 30%,#dfe4ea);box-shadow:inset 0 0 0 1px #fff"></div>
<div class="t" style="left:63.3px;top:699.27px;font-size:11.5px;font-weight:normal;font-style:normal;color:#111;letter-spacing:0.609px;">1414761</div>
<div class="t" style="left:168.2px;top:699.27px;font-size:11.5px;font-weight:normal;font-style:normal;color:#111;letter-spacing:0.609px;">2006</div>
<div class="t" style="left:232px;top:699.27px;font-size:11.5px;font-weight:normal;font-style:normal;color:#111;letter-spacing:0.644px;">Chevrolet</div>
<div style="position:absolute;left:300px;top:694px;width:206px;height:20px;overflow:hidden"><div class="t" style="left:-0.3px;top:5.27px;font-size:11.5px;font-weight:normal;font-style:normal;color:#111;letter-spacing:0.461px;">Cobalt</div></div>
<div class="t" style="left:836.2px;top:699.27px;font-size:11.5px;font-weight:normal;font-style:normal;color:#111;letter-spacing:-0.667px;">OFF</div>
<div class="t" style="left:967px;top:699.27px;font-size:11.5px;font-weight:normal;font-style:normal;color:#111;letter-spacing:-0.125px;">ON</div>
<div class="t" style="left:1109.8px;top:699.27px;font-size:11.5px;font-weight:normal;font-style:normal;color:#111;letter-spacing:-0.125px;">ON</div>
<div style="position:absolute;left:1263px;top:701px;width:3px;height:6px;border-left:1.6px solid #2a2a2a;border-radius:3px 0 0 3px;box-sizing:border-box"></div>
<div style="position:absolute;left:9px;top:714px;width:1256px;height:20px;background:#dee7f2"></div>
<div style="position:absolute;left:26px;top:717px;width:12px;height:12px;border:1px solid #5f6b78;border-radius:2px;background:linear-gradient(#fff,#fafbfc 30%,#dfe4ea);box-shadow:inset 0 0 0 1px #fff"></div>
<div class="t" style="left:63.3px;top:719.27px;font-size:11.5px;font-weight:normal;font-style:normal;color:#111;letter-spacing:0.732px;">1380611</div>
<div class="t" style="left:168.2px;top:719.27px;font-size:11.5px;font-weight:normal;font-style:normal;color:#111;letter-spacing:0.609px;">2007</div>
<div class="t" style="left:232px;top:719.27px;font-size:11.5px;font-weight:normal;font-style:normal;color:#111;letter-spacing:0.379px;">Pontiac</div>
<div style="position:absolute;left:300px;top:714px;width:206px;height:20px;overflow:hidden"><div class="t" style="left:-0.3px;top:5.27px;font-size:11.5px;font-weight:normal;font-style:normal;color:#111;letter-spacing:0.606px;">Grand Prix</div></div>
<div class="t" style="left:836.2px;top:719.27px;font-size:11.5px;font-weight:normal;font-style:normal;color:#111;letter-spacing:-0.667px;">OFF</div>
<div class="t" style="left:967px;top:719.27px;font-size:11.5px;font-weight:normal;font-style:normal;color:#111;letter-spacing:-0.125px;">ON</div>
<div class="t" style="left:1109.8px;top:719.27px;font-size:11.5px;font-weight:normal;font-style:normal;color:#111;letter-spacing:-0.667px;">OFF</div>
<div style="position:absolute;left:1263px;top:721px;width:3px;height:6px;border-left:1.6px solid #2a2a2a;border-radius:3px 0 0 3px;box-sizing:border-box"></div>
<div style="position:absolute;left:9px;top:734px;width:1256px;height:20px;background:#c4dffc"></div>
<div style="position:absolute;left:26px;top:737px;width:12px;height:12px;border:1px solid #5f6b78;border-radius:2px;background:linear-gradient(#fff,#fafbfc 30%,#dfe4ea);box-shadow:inset 0 0 0 1px #fff"></div>
<div class="t" style="left:63.3px;top:739.27px;font-size:11.5px;font-weight:normal;font-style:normal;color:#111;letter-spacing:0.609px;">1360431</div>
<div class="t" style="left:168.2px;top:739.27px;font-size:11.5px;font-weight:normal;font-style:normal;color:#111;letter-spacing:0.609px;">2009</div>
<div class="t" style="left:232px;top:739.27px;font-size:11.5px;font-weight:normal;font-style:normal;color:#111;letter-spacing:0.69px;">Saturn</div>
<div style="position:absolute;left:300px;top:734px;width:206px;height:20px;overflow:hidden"><div class="t" style="left:-0.3px;top:5.27px;font-size:11.5px;font-weight:normal;font-style:normal;color:#111;letter-spacing:0.658px;">Aura Green Line Hybrid:Aura Hybrid</div></div>
<div class="t" style="left:836.2px;top:739.27px;font-size:11.5px;font-weight:normal;font-style:normal;color:#111;letter-spacing:-0.667px;">OFF</div>
<div class="t" style="left:967px;top:739.27px;font-size:11.5px;font-weight:normal;font-style:normal;color:#111;letter-spacing:-0.125px;">ON</div>
<div class="t" style="left:1109.8px;top:739.27px;font-size:11.5px;font-weight:normal;font-style:normal;color:#111;letter-spacing:-0.667px;">OFF</div>
<div style="position:absolute;left:1263px;top:741px;width:3px;height:6px;border-left:1.6px solid #2a2a2a;border-radius:3px 0 0 3px;box-sizing:border-box"></div>
<div style="position:absolute;left:9px;top:754px;width:1256px;height:20px;background:linear-gradient(#ff7800,#ffb000 25%,#ffff00 50%,#ffb000 75%,#ff7800)"></div>
<div style="position:absolute;left:26px;top:757px;width:12px;height:12px;border:1px solid #58a8c8;border-radius:2px;background:linear-gradient(#fff,#fafbfc 30%,#dfe4ea);box-shadow:inset 0 0 0 1px #fff"></div><svg style="position:absolute;left:27px;top:757px" width="13" height="13" viewBox="0 0 13 13"><path d="M2.3 7.6 L4.7 10.6 L10 2.6" stroke="#262626" stroke-width="1.9" fill="none" stroke-linejoin="round" stroke-linecap="round"/></svg>
<div class="t" style="left:63.3px;top:759.27px;font-size:11.5px;font-weight:normal;font-style:normal;color:#111;letter-spacing:0.609px;">1495631</div>
<div class="t" style="left:168.2px;top:759.27px;font-size:11.5px;font-weight:normal;font-style:normal;color:#111;letter-spacing:0.609px;">2003</div>
<div class="t" style="left:232px;top:759.27px;font-size:11.5px;font-weight:normal;font-style:normal;color:#111;letter-spacing:0.644px;">Chevrolet</div>
<div style="position:absolute;left:300px;top:754px;width:206px;height:20px;overflow:hidden"><div class="t" style="left:-0.3px;top:5.27px;font-size:11.5px;font-weight:normal;font-style:normal;color:#111;letter-spacing:0.665px;">Silverado 3500</div></div>
<div class="t" style="left:836.2px;top:759.27px;font-size:11.5px;font-weight:normal;font-style:normal;color:#111;letter-spacing:-0.667px;">OFF</div>
<div class="t" style="left:967px;top:759.27px;font-size:11.5px;font-weight:normal;font-style:normal;color:#111;letter-spacing:-0.125px;">ON</div>
<div class="t" style="left:1109.8px;top:759.27px;font-size:11.5px;font-weight:normal;font-style:normal;color:#111;letter-spacing:-0.125px;">ON</div>
<div style="position:absolute;left:1263px;top:761px;width:3px;height:6px;border-left:1.6px solid #2a2a2a;border-radius:3px 0 0 3px;box-sizing:border-box"></div>
<div style="position:absolute;left:9px;top:774px;width:1256px;height:20px;background:#c4dffc"></div>
<div style="position:absolute;left:26px;top:777px;width:12px;height:12px;border:1px solid #5f6b78;border-radius:2px;background:linear-gradient(#fff,#fafbfc 30%,#dfe4ea);box-shadow:inset 0 0 0 1px #fff"></div>
<div class="t" style="left:63.3px;top:779.27px;font-size:11.5px;font-weight:normal;font-style:normal;color:#111;letter-spacing:0.609px;">1446681</div>
<div class="t" style="left:168.2px;top:779.27px;font-size:11.5px;font-weight:normal;font-style:normal;color:#111;letter-spacing:0.609px;">2002</div>
<div class="t" style="left:232px;top:779.27px;font-size:11.5px;font-weight:normal;font-style:normal;color:#111;letter-spacing:0.575px;">Buick</div>
<div style="position:absolute;left:300px;top:774px;width:206px;height:20px;overflow:hidden"><div class="t" style="left:-0.3px;top:5.27px;font-size:11.5px;font-weight:normal;font-style:normal;color:#111;letter-spacing:0.507px;">LeSabre</div></div>
<div class="t" style="left:836.2px;top:779.27px;font-size:11.5px;font-weight:normal;font-style:normal;color:#111;letter-spacing:-0.667px;">OFF</div>
<div class="t" style="left:967px;top:779.27px;font-size:11.5px;font-weight:normal;font-style:normal;color:#111;letter-spacing:-0.125px;">ON</div>
<div class="t" style="left:1109.8px;top:779.27px;font-size:11.5px;font-weight:normal;font-style:normal;color:#111;letter-spacing:-0.667px;">OFF</div>
<div style="position:absolute;left:1263px;top:781px;width:3px;height:6px;border-left:1.6px solid #2a2a2a;border-radius:3px 0 0 3px;box-sizing:border-box"></div>
<div style="position:absolute;left:9px;top:794px;width:1256px;height:20px;background:#dee7f2"></div>
<div style="position:absolute;left:26px;top:797px;width:12px;height:12px;border:1px solid #5f6b78;border-radius:2px;background:linear-gradient(#fff,#fafbfc 30%,#dfe4ea);box-shadow:inset 0 0 0 1px #fff"></div>
<div class="t" style="left:63.3px;top:799.27px;font-size:11.5px;font-weight:normal;font-style:normal;color:#111;letter-spacing:0.609px;">1516201</div>
<div class="t" style="left:168.2px;top:799.27px;font-size:11.5px;font-weight:normal;font-style:normal;color:#111;letter-spacing:0.609px;">2006</div>
<div class="t" style="left:232px;top:799.27px;font-size:11.5px;font-weight:normal;font-style:normal;color:#111;letter-spacing:0.644px;">Chevrolet</div>
<div style="position:absolute;left:300px;top:794px;width:206px;height:20px;overflow:hidden"><div class="t" style="left:-0.3px;top:5.27px;font-size:11.5px;font-weight:normal;font-style:normal;color:#111;letter-spacing:0.354px;">Malibu</div></div>
<div class="t" style="left:836.2px;top:799.27px;font-size:11.5px;font-weight:normal;font-style:normal;color:#111;letter-spacing:-0.667px;">OFF</div>
<div class="t" style="left:967px;top:799.27px;font-size:11.5px;font-weight:normal;font-style:normal;color:#111;letter-spacing:-0.125px;">ON</div>
<div class="t" style="left:1109.8px;top:799.27px;font-size:11.5px;font-weight:normal;font-style:normal;color:#111;letter-spacing:-0.125px;">ON</div>
<div style="position:absolute;left:1263px;top:801px;width:3px;height:6px;border-left:1.6px solid #2a2a2a;border-radius:3px 0 0 3px;box-sizing:border-box"></div>
<div style="position:absolute;left:9px;top:814px;width:1256px;height:20px;background:#c4dffc"></div>
<div style="position:absolute;left:26px;top:817px;width:12px;height:12px;border:1px solid #5f6b78;border-radius:2px;background:linear-gradient(#fff,#fafbfc 30%,#dfe4ea);box-shadow:inset 0 0 0 1px #fff"></div>
<div class="t" style="left:63.3px;top:819.27px;font-size:11.5px;font-weight:normal;font-style:normal;color:#111;letter-spacing:0.609px;">1544681</div>
<div class="t" style="left:168.2px;top:819.27px;font-size:11.5px;font-weight:normal;font-style:normal;color:#111;letter-spacing:0.609px;">2007</div>
<div class="t" style="left:232px;top:819.27px;font-size:11.5px;font-weight:normal;font-style:normal;color:#111;letter-spacing:0.644px;">Chevrolet</div>
<div style="position:absolute;left:300px;top:814px;width:206px;height:20px;overflow:hidden"><div class="t" style="left:-0.3px;top:5.27px;font-size:11.5px;font-weight:normal;font-style:normal;color:#111;letter-spacing:0.461px;">Cobalt</div></div>
<div class="t" style="left:836.2px;top:819.27px;font-size:11.5px;font-weight:normal;font-style:normal;color:#111;letter-spacing:-0.667px;">OFF</div>
<div class="t" style="left:967px;top:819.27px;font-size:11.5px;font-weight:normal;font-style:normal;color:#111;letter-spacing:-0.125px;">ON</div>
<div class="t" style="left:1109.8px;top:819.27px;font-size:11.5px;font-weight:normal;font-style:normal;color:#111;letter-spacing:-0.667px;">OFF</div>
<div style="position:absolute;left:1263px;top:821px;width:3px;height:6px;border-left:1.6px solid #2a2a2a;border-radius:3px 0 0 3px;box-sizing:border-box"></div>
<div style="position:absolute;left:506px;top:391px;width:324px;height:443px;background:#dbeef2"></div>
<div style="position:absolute;left:9px;top:834px;width:1256px;height:1px;background:#c4c9ce"></div>
<div style="position:absolute;left:9px;top:835px;width:1256px;height:16px;background:linear-gradient(#f0f2f4,#e2e6ea 50%,#eef1f4)"></div>
<div style="position:absolute;left:26px;top:835px;width:998px;height:14px;border:1px solid #9aa3ab;border-radius:3px;background:linear-gradient(#fff,#fbfcfc 40%,#d8dcdf)"></div>
<div style="position:absolute;left:14px;top:839px;width:0;height:0;border-top:4px solid transparent;border-bottom:4px solid transparent;border-right:4px solid #111"></div>
<div style="position:absolute;left:1256px;top:839px;width:0;height:0;border-top:4px solid transparent;border-bottom:4px solid transparent;border-left:4px solid #111"></div>
<div style="position:absolute;left:8px;top:851px;width:1258px;height:1px;background:#7f8c96"></div>
<div class="t" style="left:1186.9px;top:857.14px;font-size:12px;font-weight:normal;font-style:normal;color:#111;letter-spacing:0.716px;">Total #: 2212</div>
<div style="position:absolute;left:8px;top:854px;width:155px;height:15px;border:2px solid #3d9ec0;border-radius:10px"></div>
<svg style="position:absolute;left:15px;top:856px" width="12" height="13" viewBox="0 0 12 13"><defs><linearGradient id="tg" x1="0" x2="1"><stop offset="0" stop-color="#a8a8a8"/><stop offset="0.5" stop-color="#dedede"/><stop offset="1" stop-color="#9c9c9c"/></linearGradient></defs><path d="M3.5 2.2 Q5.3 -0.2 7 2.2" stroke="#9a9a9a" stroke-width="1" fill="none"/><rect x="0.3" y="2.5" width="10.4" height="2.2" rx="1" fill="url(#tg)"/><path d="M1.2 5h8.6l-0.5 7.8h-7.6z" fill="url(#tg)"/><path d="M3.5 6v6 M5.5 6v6 M7.5 6v6" stroke="#a0a0a0" stroke-width="0.7"/></svg>
<div class="t" style="left:29.1px;top:856.84px;font-size:12px;font-weight:normal;font-style:italic;color:#111;letter-spacing:0.372px;">Delete selected records</div>
<svg style="position:absolute;left:0;top:830px" width="200" height="44" viewBox="0 830 200 44"><defs><filter id="sh" x="-20%" y="-60%" width="140%" height="220%"><feGaussianBlur stdDeviation="2.2"/></filter><mask id="gap" maskUnits="userSpaceOnUse" x="0" y="830" width="200" height="44"><rect x="0" y="830" width="200" height="44" fill="#fff"/><rect x="66" y="836" width="10" height="10" fill="#000"/></mask></defs><g transform="rotate(-1.2 92 858)"><path fill-rule="evenodd" fill="#222" fill-opacity="0.5" filter="url(#sh)" transform="translate(3,4)" d="M0.5 858.5a91.5 18 0 1 0 183 0a91.5 18 0 1 0 -183 0z M3.5 858.25a85 14.75 0 1 0 170 0a85 14.75 0 1 0 -170 0z"/><g mask="url(#gap)"><path fill-rule="evenodd" fill="#ea1a1a" d="M0.5 858.5a91.5 18 0 1 0 183 0a91.5 18 0 1 0 -183 0z M3.5 858.25a85 14.75 0 1 0 170 0a85 14.75 0 1 0 -170 0z"/></g></g></svg>
</body></html>
